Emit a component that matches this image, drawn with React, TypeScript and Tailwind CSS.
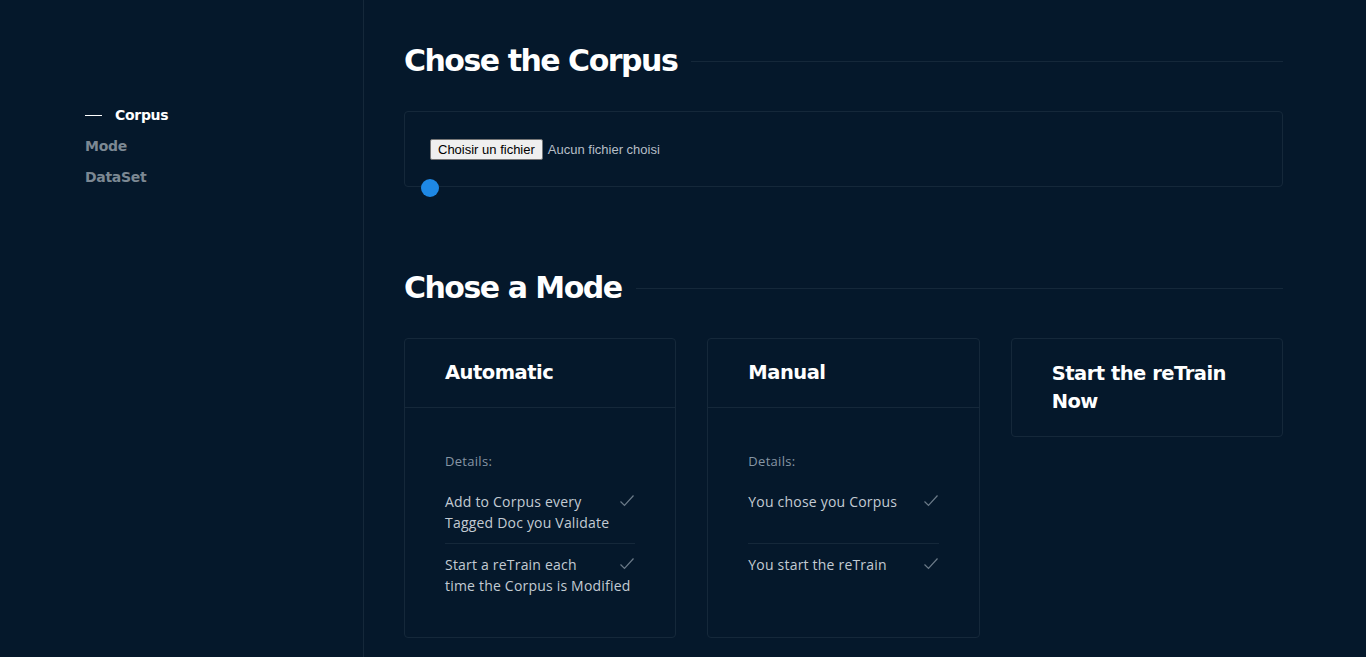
import React from "react";

const heading = { fontFamily: '"DejaVu Sans", sans-serif' };

function Check() {
  return (
    <svg width="16" height="14" viewBox="0 0 16 14" className="float-right ml-3 mt-[3px]">
      <path d="M1.5 7.5 L5.5 11.5 L14.5 1.5" fill="none" stroke="#6b7a88" strokeWidth="1.2" />
    </svg>
  );
}

function Item({ text, last }: { text: string; last?: boolean }) {
  return (
    <div className={`py-[10px] ${last ? "" : "border-b border-[#15283a]"}`}>
      <div className="min-h-[42px] text-[14px] leading-[21px] tracking-[0.2px] text-[#c3cbd3]">
        <Check />
        {text}
      </div>
    </div>
  );
}

function ModeCard({ title, items }: { title: string; items: string[] }) {
  return (
    <div className="border border-[#15283a] rounded-[4px] h-[300px]">
      <div className="border-b border-[#15283a] px-10 h-[69px] flex items-center">
        <h3 className="text-white text-[19.5px] font-bold tracking-[-0.5px]" style={heading}>{title}</h3>
      </div>
      <div className="px-10 pt-[44px]">
        <div className="text-[13px] text-[#8796a5] mb-[9px] tracking-[0.3px]">Details:</div>
        {items.map((t, i) => (
          <Item key={i} text={t} last={i === items.length - 1} />
        ))}
      </div>
    </div>
  );
}

export default function App() {
  return (
    <div className="min-h-[657px] h-[657px] overflow-hidden bg-[#05182b] flex" style={{ fontFamily: '"Open Sans", sans-serif' }}>
      <aside className="w-[364px] shrink-0 border-r border-[#15283a] pt-[100px] pl-[85px]">
        <nav className="flex flex-col text-[14px] font-bold tracking-[-0.3px]" style={heading}>
          <div className="flex items-center h-[31px]">
            <span className="w-[17px] h-px bg-white mr-[13px]" />
            <span className="text-white">Corpus</span>
          </div>
          <div className="h-[31px] leading-[31px] text-[#7c8893]">Mode</div>
          <div className="h-[31px] leading-[31px] text-[#7c8893]">DataSet</div>
        </nav>
      </aside>
      <main className="flex-1 pl-[40px] pr-[83px] pt-[40px]">
        <div className="flex items-center gap-[14px]">
          <h2 className="text-white text-[30px] font-bold leading-[42px] tracking-[-1.5px]" style={heading}>Chose the Corpus</h2>
          <div className="flex-1 h-px bg-[#15283a]" />
        </div>
        <div className="relative mt-[29px] border border-[#15283a] rounded-[4px] h-[76px] pl-[25px] pt-[27px]">
          <div className="flex items-center gap-[5px]" style={{ fontFamily: '"Liberation Sans", Arial, sans-serif' }}>
            <span className="bg-[#efefef] border border-[#767676] text-[13px] text-black px-[7px] h-[21px] leading-[19px] rounded-[2px]">Choisir un fichier</span>
            <span className="text-[13px] text-[#b7bfc7]">Aucun fichier choisi</span>
          </div>
          <span className="absolute left-[16px] bottom-[-11px] w-[18px] h-[18px] rounded-full bg-[#1e88e5]" />
        </div>
        <div className="flex items-center gap-[14px] mt-[80px]">
          <h2 className="text-white text-[30px] font-bold leading-[42px] tracking-[-1.5px]" style={heading}>Chose a Mode</h2>
          <div className="flex-1 h-px bg-[#15283a]" />
        </div>
        <div className="grid grid-cols-3 gap-[31px] mt-[29px] items-start">
          <ModeCard title="Automatic" items={["Add to Corpus every Tagged Doc you Validate", "Start a reTrain each time the Corpus is Modified"]} />
          <ModeCard title="Manual" items={["You chose you Corpus", "You start the reTrain"]} />
          <div className="border border-[#15283a] rounded-[4px] px-10 pt-[21px] pb-[20px]">
            <h3 className="text-white text-[19.5px] font-bold leading-[28px] tracking-[-0.5px]" style={heading}>Start the reTrain Now</h3>
          </div>
        </div>
      </main>
    </div>
  );
}
